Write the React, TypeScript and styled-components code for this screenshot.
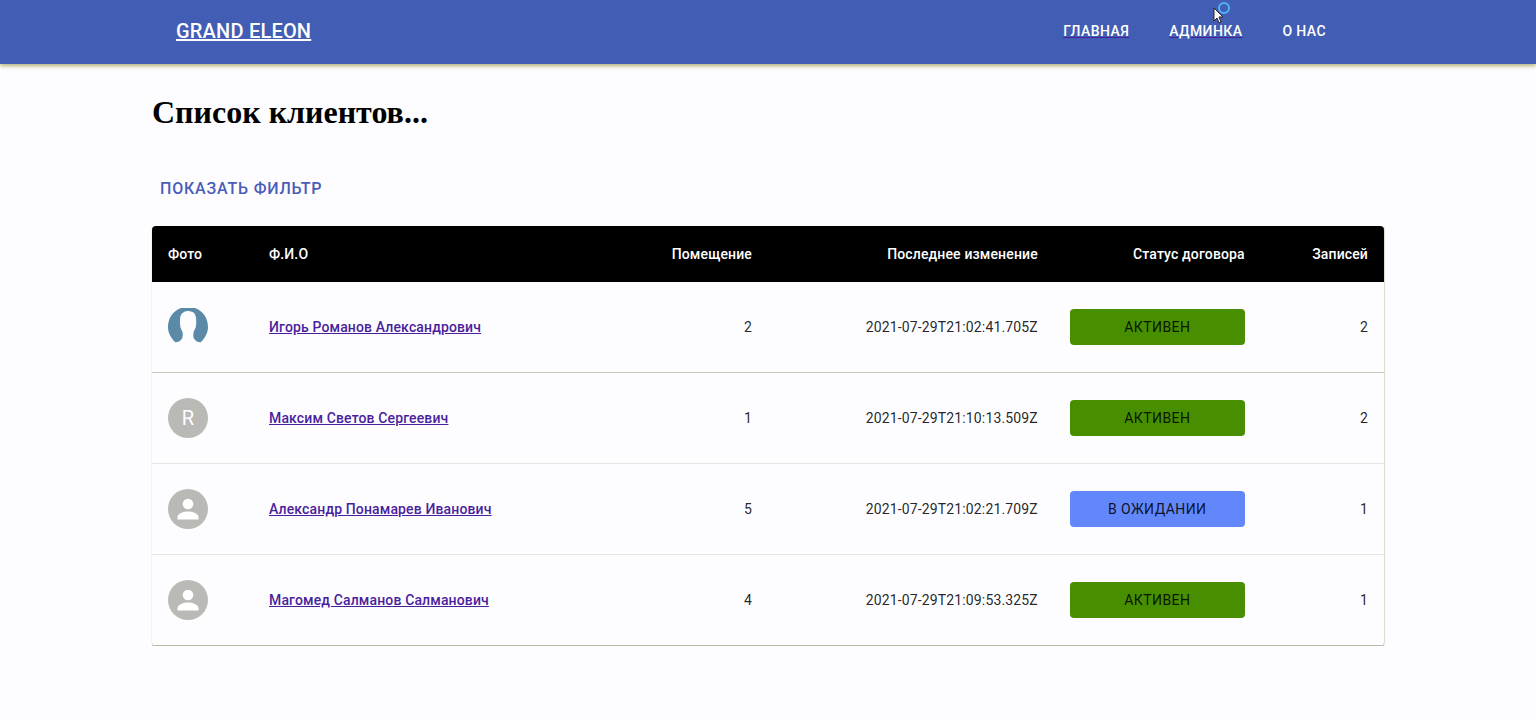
import React from 'react';
import styled, { createGlobalStyle } from 'styled-components';

const Global = createGlobalStyle`
  *, *::before, *::after { box-sizing: border-box; }
  body {
    margin: 0;
    background: #fdfdff;
    color: rgba(0, 0, 0, 0.87);
    font-family: Roboto, sans-serif;
    font-size: 14px;
    line-height: 20px;
  }
`;

const Header = styled.header`
  background: #425eb4;
  box-shadow: 0 2px 4px rgba(130, 130, 30, 0.6);
`;

const Container = styled.div`
  max-width: 1280px;
  margin: 0 auto;
  padding: 0 24px;
`;

const Toolbar = styled.div`
  display: flex;
  align-items: center;
  justify-content: space-between;
  min-height: 64px;
  padding: 0 24px 2px;
`;

const Brand = styled.a`
  color: #fff;
  font-size: 20px;
  font-weight: 500;
  line-height: 32px;
  letter-spacing: 0.01em;
`;

const Nav = styled.nav`
  display: flex;
  gap: 8px;
  padding-right: 18px;
`;

const NavLink = styled.a<{ $underlined?: boolean }>`
  padding: 8px 16px;
  color: #fff;
  font-weight: 500;
  letter-spacing: 0.03em;
  text-decoration: ${(p) => (p.$underlined ? 'underline #4a1f9e' : 'none')};
`;

const Title = styled.h1`
  margin: 28px 0 40px;
  color: #000;
  font-family: 'Liberation Serif', serif;
  font-size: 32px;
  font-weight: 700;
  line-height: 40px;
`;

const FilterButton = styled.button`
  display: block;
  margin: 0 0 18px;
  padding: 7px 8px 9px;
  border: 0;
  border-radius: 4px;
  background: none;
  color: #4a5cb8;
  font: 500 16px/20px Roboto, sans-serif;
  letter-spacing: 0.05em;
  text-transform: uppercase;
`;

const TablePaper = styled.div`
  overflow: hidden;
  border-radius: 4px;
  box-shadow: 0 1px 1px rgba(110, 110, 40, 0.6), 1px 0 1px rgba(130, 130, 60, 0.2);
`;

const Table = styled.table`
  width: 100%;
  border-collapse: separate;
  border-spacing: 0;
  table-layout: fixed;
  letter-spacing: 0.01em;
`;

const HeadCell = styled.th<{ $right?: boolean }>`
  height: 56px;
  padding: 0 16px;
  background: #000;
  color: #fff;
  font-weight: 500;
  text-align: ${(p) => (p.$right ? 'right' : 'left')};
`;

const Cell = styled.td<{ $right?: boolean }>`
  height: 91px;
  padding: 0 16px;
  border-bottom: 1px solid #e4e4e0;
  text-align: ${(p) => (p.$right ? 'right' : 'left')};
  tr:first-child > & { border-bottom-color: #c8c8b4; }
  tr:last-child > & { border-bottom-color: #b8b8a0; }
`;

const ClientLink = styled.a`
  color: #4a1f9e;
  font-weight: 500;
`;

const StatusButton = styled.button<{ $pending?: boolean }>`
  display: block;
  width: 100%;
  padding: 8px 16px;
  border: 0;
  border-radius: 4px;
  background: ${(p) => (p.$pending ? '#6287fa' : '#478e00')};
  color: rgba(0, 0, 0, 0.87);
  font: 400 14px/20px Roboto, sans-serif;
  letter-spacing: 0.03em;
  text-transform: uppercase;
`;

const AvatarArt = styled.svg`
  display: block;
  width: 40px;
  height: 40px;
`;

const LetterAvatar = styled.div`
  display: flex;
  align-items: center;
  justify-content: center;
  width: 40px;
  height: 40px;
  border-radius: 50%;
  background: #b9b9b5;
  color: #fff;
  font-size: 20px;
`;

const Pointer = styled.svg`
  position: absolute;
  top: 0;
  left: 1212px;
  width: 20px;
  height: 26px;
  pointer-events: none;
`;

type AvatarKind = 'photo' | 'letter' | 'person';

function Avatar({ kind }: { kind: AvatarKind }) {
  if (kind === 'letter') return <LetterAvatar>R</LetterAvatar>;
  if (kind === 'photo') {
    return (
      <AvatarArt viewBox="0 0 40 40" aria-hidden="true">
        <path
          d="M7 35C3 31 0 26 0 20C0 11 5 4 13 1H27C35 4 40 11 40 20C40 26 37 31 33 35C30 36 26 33 25.500 30C25 27 25.500 25 26.500 23C28.500 20 28.500 15 28 11C27.500 6 25 5 23 4.500C21 3.500 18 4 16 5C13 6.500 12 9 12 13C12 17 12 20 13.500 23C15 25 15 27 14.500 30C14 33 10 36 7 35Z"
          fill="#5b89a8"
        />
      </AvatarArt>
    );
  }
  return (
    <AvatarArt viewBox="0 0 40 40" aria-hidden="true">
      <circle cx="20" cy="20" r="20" fill="#b9b9b5" />
      <circle cx="20" cy="15" r="5.300" fill="#fff" />
      <path d="M9.500 30.500V28C9.500 24.500 16 22.500 20 22.500S30.500 24.500 30.500 28V30.500Z" fill="#fff" />
    </AvatarArt>
  );
}

interface Client {
  name: string;
  avatar: AvatarKind;
  room: number;
  changed: string;
  pending?: boolean;
  records: number;
}

const clients: Client[] = [
  { name: 'Игорь Романов Александрович', avatar: 'photo', room: 2, changed: '2021-07-29T21:02:41.705Z', records: 2 },
  { name: 'Максим Светов Сергеевич', avatar: 'letter', room: 1, changed: '2021-07-29T21:10:13.509Z', records: 2 },
  { name: 'Александр Понамарев Иванович', avatar: 'person', room: 5, changed: '2021-07-29T21:02:21.709Z', pending: true, records: 1 },
  { name: 'Магомед Салманов Салманович', avatar: 'person', room: 4, changed: '2021-07-29T21:09:53.325Z', records: 1 },
];

const Col = styled.col<{ $share: number }>`
  width: ${(p) => p.$share}%;
`;

export default function App() {
  return (
    <>
      <Global />
      <Header>
        <Container>
          <Toolbar>
            <Brand href="#">GRAND ELEON</Brand>
            <Nav>
              <NavLink href="#" $underlined>ГЛАВНАЯ</NavLink>
              <NavLink href="#" $underlined>АДМИНКА</NavLink>
              <NavLink href="#">О НАС</NavLink>
            </Nav>
          </Toolbar>
        </Container>
      </Header>
      <Container as="main">
        <Title>Список клиентов...</Title>
        <FilterButton type="button">Показать фильтр</FilterButton>
        <TablePaper>
          <Table>
            <colgroup>
              <Col $share={8.2} />
              <Col $share={29.5} />
              <Col $share={12.3} />
              <Col $share={23.2} />
              <Col $share={16.8} />
              <Col $share={10} />
            </colgroup>
            <thead>
              <tr>
                <HeadCell>Фото</HeadCell>
                <HeadCell>Ф.И.О</HeadCell>
                <HeadCell $right>Помещение</HeadCell>
                <HeadCell $right>Последнее изменение</HeadCell>
                <HeadCell $right>Статус договора</HeadCell>
                <HeadCell $right>Записей</HeadCell>
              </tr>
            </thead>
            <tbody>
              {clients.map((c) => (
                <tr key={c.name}>
                  <Cell><Avatar kind={c.avatar} /></Cell>
                  <Cell><ClientLink href="#">{c.name}</ClientLink></Cell>
                  <Cell $right>{c.room}</Cell>
                  <Cell $right>{c.changed}</Cell>
                  <Cell>
                    <StatusButton type="button" $pending={c.pending}>
                      {c.pending ? 'В ожидании' : 'Активен'}
                    </StatusButton>
                  </Cell>
                  <Cell $right>{c.records}</Cell>
                </tr>
              ))}
            </tbody>
          </Table>
        </TablePaper>
      </Container>
      <Pointer viewBox="0 0 20 26" aria-hidden="true">
        <circle cx="12" cy="8" r="5" fill="none" stroke="#4fb4f4" strokeWidth="2" />
        <path d="M2 8V21L5 18L7 23L9 22L7 17H11Z" fill="#fff" stroke="#222" strokeWidth="1" />
      </Pointer>
    </>
  );
}
